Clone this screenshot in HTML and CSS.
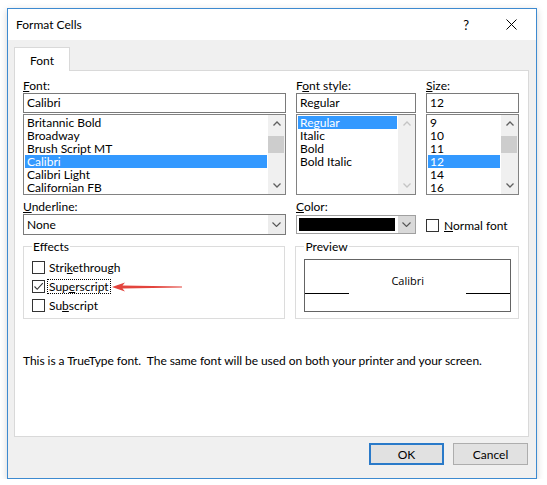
FILE: index.html
```html
<!DOCTYPE html>
<html>
<head>
<meta charset="utf-8">
<title>Format Cells</title>
<link rel="stylesheet" href="styles.css">
</head>
<body>
<div class="window">
  <div class="titlebar">
    <span class="title">Format Cells</span>
    <span class="help">?</span>
    <svg class="close" width="11" height="11" viewBox="0 0 11 11"><path d="M0.5 0.5L10.5 10.5M10.5 0.5L0.5 10.5" stroke="#000" stroke-width="1" fill="none"/></svg>
  </div>
  <div class="body">
    <div class="tabs"><div class="tab">Font</div></div>
    <div class="panel">
      <div class="row row-a">
        <div class="field col1">
          <div class="label"><u>F</u>ont:</div>
          <div class="textbox">Calibri</div>
          <div class="listbox">
            <div class="items">
              <div class="item">Britannic Bold</div>
              <div class="item">Broadway</div>
              <div class="item">Brush Script MT</div>
              <div class="item sel">Calibri</div>
              <div class="item">Calibri Light</div>
              <div class="item">Californian FB</div>
            </div>
            <div class="scrollbar">
              <div class="arrow"><svg width="8" height="5" viewBox="0 0 8 5"><path d="M0.5 4.5L4 1L7.5 4.5" stroke="#606060" stroke-width="1.3" fill="none"/></svg></div>
              <div class="track"><div class="thumb"></div></div>
              <div class="arrow"><svg width="8" height="5" viewBox="0 0 8 5"><path d="M0.5 0.5L4 4L7.5 0.5" stroke="#606060" stroke-width="1.3" fill="none"/></svg></div>
            </div>
          </div>
        </div>
        <div class="field col2">
          <div class="label">F<u>o</u>nt style:</div>
          <div class="textbox">Regular</div>
          <div class="listbox">
            <div class="items">
              <div class="item sel">Regular</div>
              <div class="item">Italic</div>
              <div class="item">Bold</div>
              <div class="item">Bold Italic</div>
            </div>
            <div class="scrollbar">
              <div class="arrow"><svg width="8" height="5" viewBox="0 0 8 5"><path d="M0.5 4.5L4 1L7.5 4.5" stroke="#c4c4c4" stroke-width="1.3" fill="none"/></svg></div>
              <div class="track"></div>
              <div class="arrow"><svg width="8" height="5" viewBox="0 0 8 5"><path d="M0.5 0.5L4 4L7.5 0.5" stroke="#c4c4c4" stroke-width="1.3" fill="none"/></svg></div>
            </div>
          </div>
        </div>
        <div class="field col3">
          <div class="label"><u>S</u>ize:</div>
          <div class="textbox">12</div>
          <div class="listbox">
            <div class="items">
              <div class="item">9</div>
              <div class="item">10</div>
              <div class="item">11</div>
              <div class="item sel">12</div>
              <div class="item">14</div>
              <div class="item">16</div>
            </div>
            <div class="scrollbar">
              <div class="arrow"><svg width="8" height="5" viewBox="0 0 8 5"><path d="M0.5 4.5L4 1L7.5 4.5" stroke="#606060" stroke-width="1.3" fill="none"/></svg></div>
              <div class="track"><div class="thumb"></div></div>
              <div class="arrow"><svg width="8" height="5" viewBox="0 0 8 5"><path d="M0.5 0.5L4 4L7.5 0.5" stroke="#606060" stroke-width="1.3" fill="none"/></svg></div>
            </div>
          </div>
        </div>
      </div>

      <div class="row row-b">
        <div class="field col1">
          <div class="label"><u>U</u>nderline:</div>
          <div class="combo">
            <span class="combo-text">None</span>
            <span class="combo-btn"><svg width="9" height="5" viewBox="0 0 9 5"><path d="M0.5 0.5L4.5 4.5L8.5 0.5" stroke="#555" stroke-width="1.1" fill="none"/></svg></span>
          </div>
        </div>
        <div class="field col2">
          <div class="label"><u>C</u>olor:</div>
          <div class="combo color-combo">
            <span class="swatch"></span>
            <span class="combo-btn grey"><svg width="9" height="5" viewBox="0 0 9 5"><path d="M0.5 0.5L4.5 4.5L8.5 0.5" stroke="#555" stroke-width="1.1" fill="none"/></svg></span>
          </div>
        </div>
        <div class="field col3 normal">
          <div class="check-row">
            <span class="checkbox"></span>
            <span class="check-label plain"><u>N</u>ormal font</span>
          </div>
        </div>
      </div>

      <div class="row row-c">
        <fieldset class="group col1">
          <legend>Effects</legend>
          <div class="check-row">
            <span class="checkbox"></span>
            <span class="check-label">Stri<u>k</u>ethrough</span>
          </div>
          <div class="check-row">
            <span class="checkbox"><svg width="11" height="11" viewBox="0 0 11 11"><path d="M1.5 5.5L4.2 8.3L9.8 2.2" stroke="#333" stroke-width="1.1" fill="none"/></svg></span>
            <span class="check-label focus">Sup<u>e</u>rscript<svg class="red-arrow" width="70" height="12" viewBox="0 0 70 12"><polygon points="0,6 13,1.5 10.5,4.6 70,5.6 70,6.4 10.5,7.4 13,10.5" fill="#e3443d"/></svg></span>
          </div>
          <div class="check-row">
            <span class="checkbox"></span>
            <span class="check-label">Su<u>b</u>script</span>
          </div>
        </fieldset>
        <fieldset class="group preview">
          <legend>Preview</legend>
          <div class="preview-box">
            <div class="preview-text">Calibri</div>
            <div class="baseline"><span class="bl"></span><span class="bl"></span></div>
          </div>
        </fieldset>
      </div>

      <p class="info">This is a TrueType font.&nbsp; The same font will be used on both your printer and your screen.</p>
    </div>
    <div class="buttons">
      <button class="btn ok">OK</button>
      <button class="btn">Cancel</button>
    </div>
  </div>
</div>
</body>
</html>
```
FILE: styles.css
```css
* { box-sizing: border-box; }

body {
  margin: 0;
  background: #ffffff;
  font-family: "Lato", "Segoe UI", sans-serif;
  font-size: 12px;
  color: #000;
}

u { text-decoration: underline; text-underline-offset: 1px; }

.window {
  margin: 8px 0 0 7px;
  width: 530px;
  height: 471px;
  border: 1px solid #3d8ad0;
  background: #f0f0f0;
  box-shadow: 0 2px 7px rgba(0, 0, 0, 0.18);
  display: flex;
  flex-direction: column;
}

.titlebar {
  height: 31px;
  background: #fff;
  display: flex;
  align-items: center;
  padding-left: 8px;
}
.title { flex: 1; font-size: 12px; }
.help { font-size: 13px; margin-right: 37px; }
.close { margin-right: 19px; }

.body {
  flex: 1;
  padding: 7px 7px 0 6px;
  display: flex;
  flex-direction: column;
}

.tabs { display: flex; }
.tab {
  width: 56px;
  height: 24px;
  background: #fff;
  border: 1px solid #d9d9d9;
  border-bottom: none;
  margin-bottom: -1px;
  position: relative;
  z-index: 1;
  display: flex;
  align-items: center;
  justify-content: center;
  padding-top: 2px;
  font-size: 12px;
}

.panel {
  height: 367px;
  background: #fff;
  border: 1px solid #d9d9d9;
  padding: 7px 9px 0 8px;
}

.row { display: flex; gap: 10px; }
.col1 { width: 263px; }
.col2 { width: 120px; }
.col3 { width: 93px; }

.field { display: flex; flex-direction: column; }
.label { height: 15px; line-height: 15px; }

.textbox {
  height: 20px;
  border: 1px solid #7a7a7a;
  padding-left: 3px;
  line-height: 18px;
}

.listbox {
  margin-top: 1px;
  height: 81px;
  border: 1px solid #828282;
  display: flex;
}
.items { flex: 1; padding: 1px 1px 0 1px; }
.item {
  height: 13px;
  line-height: 13px;
  padding-left: 2px;
  white-space: nowrap;
}
.item.sel { background: #3399ff; color: #fff; }

.scrollbar {
  width: 17px;
  background: #f0f0f0;
  display: flex;
  flex-direction: column;
}
.arrow {
  height: 17px;
  display: flex;
  align-items: center;
  justify-content: center;
}
.track { flex: 1; padding: 4px 1px 0 0; }
.thumb { height: 17px; background: #cdcdcd; }

.row-b { margin-top: 4px; }
.combo {
  height: 21px;
  border: 1px solid #7a7a7a;
  display: flex;
  background: #fff;
}
.combo-text { flex: 1; padding-left: 3px; line-height: 19px; }
.combo-btn {
  width: 17px;
  background: #ececec;
  display: flex;
  align-items: center;
  justify-content: center;
}
.color-combo {
  height: 19px;
  margin-top: 1px;
  border-color: #a0a0a0;
  padding: 2px 0 2px 2px;
  align-items: stretch;
}
.swatch { flex: 1; background: #000; margin-right: 3px; }
.combo-btn.grey { background: #d9d9d9; margin: -2px 0; }

.normal { padding-top: 17px; }

.check-row {
  height: 19px;
  display: flex;
  align-items: center;
}
.checkbox {
  width: 13px;
  height: 13px;
  border: 1px solid #333;
  background: #fff;
  display: flex;
  align-items: center;
  justify-content: center;
  margin-right: 2px;
  flex-shrink: 0;
}
.check-label {
  border: 1px dotted transparent;
  padding: 0 1px;
  line-height: 13px;
  position: relative;
  white-space: nowrap;
}
.check-label.plain { margin-left: 1px; }
.check-label.focus { border-color: #000; }

.red-arrow {
  position: absolute;
  left: calc(100% + 2px);
  top: 50%;
  margin-top: -6px;
}

.row-c { margin-top: 4px; }
.group {
  margin: 0;
  border: 1px solid #dcdcdc;
  min-width: 0;
}
.group legend {
  padding: 0 1px;
  margin-left: 0;
  line-height: 15px;
  height: 15px;
}
.group.col1 { padding: 4px 5px 2px 8px; height: 80px; }
.group.preview { width: 224px; padding: 5px 7px 6px 8px; height: 80px; }

.preview-box {
  height: 53px;
  border: 1px solid #646464;
  display: flex;
  flex-direction: column;
}
.preview-text {
  text-align: center;
  font-family: "Open Sans", sans-serif;
  font-size: 11px;
  padding-top: 13px;
  height: 33px;
}
.baseline { display: flex; justify-content: space-between; }
.bl { width: 44px; border-top: 1px solid #000; }

.info {
  margin: 34px 0 0 0;
  line-height: 15px;
  letter-spacing: -0.05px;
  white-space: nowrap;
}

.buttons {
  display: flex;
  justify-content: flex-end;
  gap: 9px;
  margin-top: 6px;
  padding-right: 1px;
}
.btn {
  width: 75px;
  height: 22px;
  background: #e1e1e1;
  border: 1px solid #adadad;
  font-family: "Lato", "Segoe UI", sans-serif;
  font-size: 12px;
  color: #000;
  padding: 0;
}
.btn.ok { border: 2px solid #2a7ac9; }
```
